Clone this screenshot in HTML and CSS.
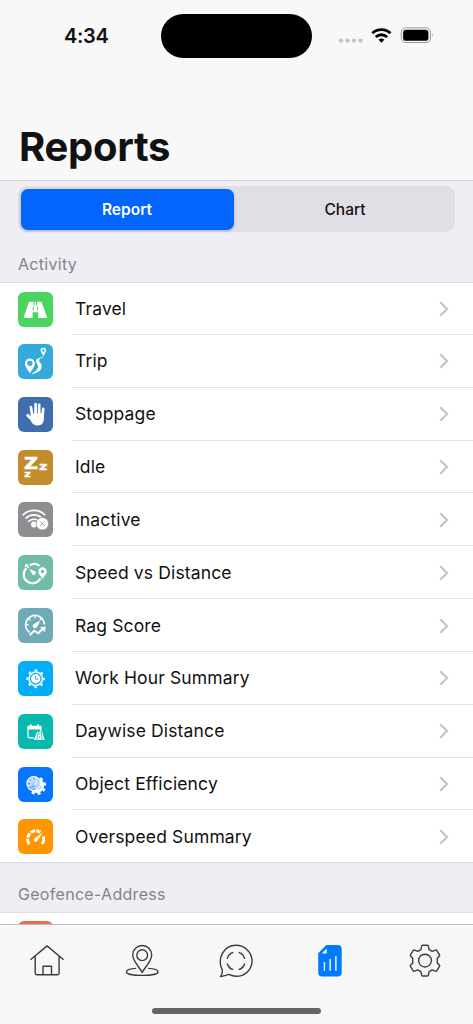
FILE: index.html
```html
<!DOCTYPE html>
<html lang="en">
<head>
<meta charset="utf-8">
<meta name="viewport" content="width=device-width, initial-scale=1">
<title>Reports</title>
<link rel="stylesheet" href="styles.css">
</head>
<body>
<div class="screen">
	<header class="header">
		<div class="status">
			<span class="time">4:34</span>
			<span class="island"></span>
			<svg class="indicators" viewBox="0 0 96 20">
				<g fill="#c4c4c5"><circle cx="3" cy="12.6" r="2.2"/><circle cx="9.5" cy="12.6" r="2.2"/><circle cx="16" cy="12.6" r="2.2"/><circle cx="22.5" cy="12.6" r="2.2"/></g>
				<g fill="none" stroke="#000" stroke-width="2.8"><path d="M34.3 5.2a13.4 13.4 0 0 1 18.2 0"/><path d="M37.7 9a8.3 8.3 0 0 1 11.4 0"/></g>
				<path d="M40.5 11.7a4.7 4.7 0 0 1 5.8 0l-2.9 3z"/>
				<rect x="63.3" y="-.1" width="29.2" height="14.6" rx="4.5" fill="none" stroke="#999" stroke-width="1"/>
				<rect x="65.1" y="1.8" width="25.3" height="10.9" rx="2.8"/>
				<path d="M94 5.2q1.7 2 0 4z" fill="#999"/>
			</svg>
		</div>
		<h1 class="title">Reports</h1>
	</header>

	<main class="content">
		<div class="segments">
			<button class="segment active">Report</button>
			<button class="segment">Chart</button>
		</div>

		<h2 class="section">Activity</h2>
		<ul class="list activity">
			<li class="row">
				<svg class="tile green" viewBox="0 0 35 35">
					<path fill="#fff" d="M11 9.700H15.500V13.500H19.200V9.700H23.500L29.300 25.900H20.200V20.300H14.600V25.900H5.500z"/>
					<path fill="#fff" d="M16.700 9.700h1.300l.2 3.900h-1.700z"/>
					<path stroke="#4cd461" stroke-width="1" d="M15.200 14.800v3.700M19.400 14.800v3.700"/>
				</svg>
				<span class="label">Travel</span>
				<svg class="chevron" viewBox="0 0 10 16"><path d="M1.3 1.3L8 8l-6.700 6.700"/></svg>
			</li>
			<li class="row">
				<svg class="tile sky" viewBox="0 0 35 35">
					<path fill="#fff" fill-rule="evenodd" d="M11.900 29.500C10 25.500 6.900 22.600 6.900 19.500a5 5 0 0 1 10 0c0 3.100-3.100 6-5 10zM11.900 16.700a2.600 2.600 0 1 0 0 5.200 2.600 2.600 0 0 0 0-5.200z"/>
					<path fill="#fff" fill-rule="evenodd" d="M25.400 12C24.500 9.700 22.600 8.400 22.600 6.500a2.800 2.800 0 0 1 5.600 0c0 1.900-1.900 3.200-2.800 5.500zM25.400 5.200a1.300 1.300 0 1 0 0 2.600 1.300 1.300 0 0 0 0-2.600z"/>
					<path fill="#fff" d="M25.700 12.200C24.200 14 21.200 14.200 21 16.200c-.1 2.200 3 2.900 2.700 6.300-.4 4.300-4.600 7.200-10.200 7.400 3.200-2.200 6.400-4 6.600-7.100.1-2.400-2.400-3.500-1.900-6.300.5-2.700 5-2.400 6.700-4.500z"/>
				</svg>
				<span class="label">Trip</span>
				<svg class="chevron" viewBox="0 0 10 16"><path d="M1.3 1.3L8 8l-6.700 6.700"/></svg>
			</li>
			<li class="row">
				<svg class="tile blue" viewBox="0 0 35 35">
					<g fill="none" stroke="#fff" stroke-linecap="round" stroke-width="2.700">
						<path d="M14.200 18.500L12.900 10M17.600 17V7.100M21.200 17V7.900M24.500 19l.7-7.200"/>
						<path stroke-width="2.900" d="M14.500 23L9.700 18.400"/>
					</g>
					<path fill="#fff" d="M12.800 16.200h13l.1 5.100c0 4.600-2.200 7.200-6.200 7.200-3 0-5.100-1.300-6.700-4.200z"/>
				</svg>
				<span class="label">Stoppage</span>
				<svg class="chevron" viewBox="0 0 10 16"><path d="M1.3 1.3L8 8l-6.700 6.700"/></svg>
			</li>
			<li class="row">
				<svg class="tile gold" viewBox="0 0 35 35">
					<g class="zzz">
						<text x="5.900" y="18.600" font-size="16.500" textLength="14" lengthAdjust="spacingAndGlyphs">Z</text>
						<text x="21.200" y="20.300" font-size="11" textLength="8" lengthAdjust="spacingAndGlyphs">z</text>
						<text x="6.200" y="27.300" font-size="9" textLength="6.400" lengthAdjust="spacingAndGlyphs">z</text>
					</g>
				</svg>
				<span class="label">Idle</span>
				<svg class="chevron" viewBox="0 0 10 16"><path d="M1.3 1.3L8 8l-6.700 6.700"/></svg>
			</li>
			<li class="row">
				<svg class="tile gray" viewBox="0 0 35 35">
					<g fill="none" stroke="#fff" stroke-width="1.700" stroke-linecap="round">
						<path d="M5.200 12.800a15.600 15.600 0 0 1 21.400-.2"/>
						<path d="M8 16.200a11.500 11.500 0 0 1 15.700-.3"/>
						<path d="M10.700 19.500a7.500 7.500 0 0 1 9.400-1"/>
					</g>
					<circle cx="16" cy="22.500" r="3" fill="#fff"/>
					<circle cx="24.300" cy="21.700" r="6.300" fill="#fff" stroke="#8e8d92" stroke-width=".8"/>
					<path stroke="#8e8d92" stroke-width=".8" d="M21.900 19.300l4.800 4.800M26.700 19.300l-4.800 4.800"/>
				</svg>
				<span class="label">Inactive</span>
				<svg class="chevron" viewBox="0 0 10 16"><path d="M1.3 1.3L8 8l-6.700 6.700"/></svg>
			</li>
			<li class="row">
				<svg class="tile mint" viewBox="0 0 35 35">
					<g fill="none" stroke="#fff" stroke-width="2.200">
						<path d="M11.700 10.200a8.800 8.800 0 0 1 9.900.7M8.500 13a8.800 8.800 0 1 0 13.800 10.500"/>
						<path d="M7.300 9.400l3.600 3.400M9.600 9.200l-2.700 2.600" stroke-width="1.500"/>
					</g>
					<path fill="#fff" d="M11.300 13.700l6 2.800a2 2 0 1 1-2.900 2.800z"/>
					<path fill="#fff" fill-rule="evenodd" d="M24.500 24.200c-1.300-3-4.200-4.800-4.200-7.700a4.200 4.200 0 0 1 8.400 0c0 2.900-2.900 4.700-4.200 7.700zM24.500 14.800a1.700 1.700 0 1 0 0 3.400 1.700 1.700 0 0 0 0-3.400z"/>
				</svg>
				<span class="label">Speed vs Distance</span>
				<svg class="chevron" viewBox="0 0 10 16"><path d="M1.3 1.3L8 8l-6.700 6.700"/></svg>
			</li>
			<li class="row">
				<svg class="tile teal" viewBox="0 0 35 35">
					<path fill="none" stroke="#fff" stroke-width="1.700" d="M11.800 24.500a9.300 9.300 0 1 1 14.500-8"/>
					<path stroke="#fff" stroke-width="1.200" d="M17 8v2.800M10.800 10.700l1.700 1.800M8.200 16.700h2.500M23.400 10.500l-1.600 1.700"/>
					<path fill="#fff" d="M22.300 12.600l-3.100 5.900a2.300 2.300 0 1 1-2.800-2.800z"/>
					<path fill="none" stroke="#fff" stroke-width="1.900" d="M11.700 27.300l4.500-4.500 4 2.500 4.700-4.600"/>
					<path fill="#fff" d="M22 19.300l5.800-.9-1 5.800z"/>
				</svg>
				<span class="label">Rag Score</span>
				<svg class="chevron" viewBox="0 0 10 16"><path d="M1.3 1.3L8 8l-6.700 6.700"/></svg>
			</li>
			<li class="row">
				<svg class="tile azure" viewBox="0 0 35 35">
					<circle cx="17.700" cy="17.800" r="6.700" fill="none" stroke="#fff" stroke-width="1.500"/>
					<circle cx="17.700" cy="17.800" r="8.400" fill="none" stroke="#fff" stroke-width="2" stroke-dasharray="2.600 3.997" stroke-dashoffset="1.300"/>
					<circle cx="17.700" cy="17.800" r="4.700" fill="#fff"/>
					<path fill="none" stroke="#04aef7" stroke-width=".9" d="M17.500 14.800v3.300h2.900"/>
				</svg>
				<span class="label">Work Hour Summary</span>
				<svg class="chevron" viewBox="0 0 10 16"><path d="M1.3 1.3L8 8l-6.700 6.700"/></svg>
			</li>
			<li class="row">
				<svg class="tile turquoise" viewBox="0 0 35 35">
					<path fill="none" stroke="#fff" stroke-width="1.200" d="M16 23.800h-4.400q-1.600 0-1.600-1.600V12.900h12.800v5"/>
					<path fill="#fff" d="M9.400 15.600v-2.400q0-1.400 1.400-1.400H12v-1.500h1.600v1.500h5.700v-1.500h1.600v1.500h1.200q1.400 0 1.400 1.400v2.400z"/>
					<path fill="#fff" d="M19 17.800h5.300l2.300 8.300H16z"/>
					<path stroke="#08b9af" stroke-width=".8" d="M20.300 18l-1.400 8M23 18l1.300 8M21.600 19v1.500M21.600 22.300v2"/>
				</svg>
				<span class="label">Daywise Distance</span>
				<svg class="chevron" viewBox="0 0 10 16"><path d="M1.3 1.3L8 8l-6.700 6.700"/></svg>
			</li>
			<li class="row">
				<svg class="tile royal" viewBox="0 0 35 35">
					<path fill="none" stroke="#fff" stroke-width="2.400" stroke-dasharray="3 3" d="M22 11.400a8 8 0 1 1-8.900 12.900"/>
					<path fill="none" stroke="#fff" stroke-width="3" d="M20.500 12.700a6 6 0 1 1-6.500 9.500"/>
					<circle cx="15.800" cy="16.600" r="7" fill="#bcdaff" stroke="#fff" stroke-width="1.100"/>
					<path fill="none" stroke="#0676ff" stroke-width=".7" d="M15.800 10.500v2M9.800 16.600h2.400M11.500 12.200l1.300 1.300M10.900 20.400l5.500-1 4.500-6.800-6.200 5M13.600 22h3.600"/>
					<path fill="#fff" d="M21.600 11.400l-4.200 7.100-1.900-1.600z"/>
				</svg>
				<span class="label">Object Efficiency</span>
				<svg class="chevron" viewBox="0 0 10 16"><path d="M1.3 1.3L8 8l-6.700 6.700"/></svg>
			</li>
			<li class="row">
				<svg class="tile orange" viewBox="0 0 35 35">
					<path fill="none" stroke="#fff" stroke-width="2.900" d="M11.200 25a8.200 8.200 0 0 1-1.700-5.300M9.700 18.600a8.200 8.200 0 0 1 2.200-4.100M12.700 13.700a8.200 8.200 0 0 1 4.400-1.900M18.300 11.800a8.200 8.200 0 0 1 4 1.500M25.300 17.400a8.200 8.200 0 0 1-1.200 7.600"/>
					<path fill="#fff" d="M25 13.300l-5.300 8a1.900 1.900 0 1 1-2.400-2.300z"/>
				</svg>
				<span class="label">Overspeed Summary</span>
				<svg class="chevron" viewBox="0 0 10 16"><path d="M1.3 1.3L8 8l-6.700 6.700"/></svg>
			</li>
		</ul>

		<h2 class="section address">Geofence-Address</h2>
		<ul class="list">
			<li class="row cut"><span class="tile coral"></span></li>
		</ul>
	</main>

	<footer class="footer">
		<nav class="tabs">
			<a class="tab"><svg viewBox="0 0 36 36"><path d="M1.500 16.700L18.100 2.900l16.500 13.800M6.200 13v17.100q0 1.600 1.600 1.600h20.700q1.600 0 1.600-1.600V13M14 31.500v-8.300h8.500v8.300"/></svg></a>
			<a class="tab"><svg viewBox="0 0 36 36"><path d="M18.200 29.400C15 23.500 8.700 18 8.700 12a9.500 9.500 0 0 1 19 0c0 6-6.300 11.500-9.500 17.400z"/><circle cx="18.200" cy="12.200" r="5.400"/><path d="M12.200 25.400C6.300 25.700 2.400 27 2.400 28.900c0 2 7 3.500 15.800 3.500S34 30.900 34 28.900c0-1.900-3.900-3.200-9.800-3.500"/></svg></a>
			<a class="tab"><svg viewBox="0 0 36 36"><path d="M2.500 33.600c1.500-2.100 2.200-4.500 1.700-6.700C-1.200 15.800 5.500 2.300 18 2.300c8.900 0 16 7 16 15.700S26.900 33.300 18 33.300c-3 0-5.100-.9-7.200-1.900-2.500.9-5.100 1.600-8.300 2.200z"/><path d="M9.200 15.800a9 9 0 0 1 6-6.400M20.700 9.400a9 9 0 0 1 6 6.400M26.700 20.500a9 9 0 0 1-6 6.200M15.200 26.700a9 9 0 0 1-6-6.200"/></svg></a>
			<a class="tab selected"><svg viewBox="0 0 36 36"><path class="page" d="M14.300 2h11.400q4 0 4 4v23.500q0 4-4 4H10.200q-4 0-4-4V10.300z"/><path class="fold" d="M14.700 5.600v4.800H9.900z"/><path class="bars" d="M12.400 19v8.800M18.100 15.900v11.900M23.900 13v14.800"/></svg></a>
			<a class="tab"><svg viewBox="0 0 36 36"><path d="M15.700 2.300h4.600q1 0 1.100 1l.7 3.300 3.200 1.700 3.200-1.200q.9-.3 1.400.5l2.600 4.300q.5.800-.2 1.400l-2 2v4.600l2 2q.7.600.2 1.400l-2.600 4.300q-.5.800-1.400.5l-3.200-1.200-3.200 1.700-.7 3.400q-.1 1-1.100 1h-4.600q-1 0-1.100-1l-.7-3.400-3.200-1.700-3.200 1.200q-.9.300-1.400-.5l-2.600-4.300q-.5-.8.200-1.400l2-2v-4.600l-2-2q-.7-.6-.2-1.400l2.600-4.300q.5-.8 1.400-.5l3.200 1.200 3.200-1.700.7-3.300q.1-1 1.100-1z"/><circle cx="18" cy="17.600" r="6.400"/></svg></a>
		</nav>
		<div class="home-bar"></div>
	</footer>
</div>
</body>
</html>
```
FILE: styles.css
```css
* {
	box-sizing: border-box;
}

body {
	margin: 0;
	background: #efeef4;
	color: #111;
	font-family: Inter, "Liberation Sans", sans-serif;
}

.screen {
	display: flex;
	flex-direction: column;
	height: 1024px;
	overflow: hidden;
}

.header {
	flex: none;
	height: 181px;
	background: #f8f8f8;
	border-bottom: 1px solid #d3d2d7;
}

.status {
	display: grid;
	grid-template-columns: 161px 151px 1fr;
	align-items: center;
	height: 58px;
	padding-top: 14px;
}

.time {
	padding-left: 64px;
	font-size: 20px;
	font-weight: 600;
	line-height: 44px;
	letter-spacing: -0.3px;
}

.island {
	height: 44px;
	border-radius: 22px;
	background: #000;
}

.indicators {
	width: 96px;
	height: 20px;
	margin: 3px 0 0 26px;
	overflow: visible;
}

.title {
	margin: 64px 0 0 19px;
	font-size: 40px;
	line-height: 50px;
	font-weight: 700;
	letter-spacing: -0.3px;
}

.content {
	flex: 1;
	min-height: 0;
	overflow: hidden;
}

.segments {
	display: grid;
	grid-template-columns: 213px 1fr;
	width: 437px;
	height: 46px;
	margin: 5px 0 0 18px;
	padding: 2.500px;
	border-radius: 9px;
	background: #e0dfe5;
}

.segment {
	padding: 0 0 0 4px;
	border: 0;
	border-radius: 7px;
	background: none;
	color: #111;
	font: 450 15.500px Inter, "Liberation Sans", sans-serif;
}

.segment.active {
	padding: 0;
	background: #0265ff;
	color: #fff;
	font-weight: 600;
	box-shadow: 0 1px 3px rgba(0,0,0,0.25);
}

.section {
	height: 51px;
	margin: 0;
	padding: 14px 0 0 18px;
	border-bottom: 1px solid #e0dfe4;
	color: #858489;
	font-size: 16px;
	font-weight: 400;
	line-height: 36px;
	letter-spacing: 0.300px;
}

.section.address {
	height: 50px;
	padding-top: 13px;
}

.list {
	margin: 0;
	padding: 0;
	list-style: none;
	background: #fff;
}

/* separator starts under the label, not the icon */
.row {
	display: flex;
	align-items: center;
	height: 52.840px;
	padding-left: 18px;
	background: linear-gradient(#e2e2e4,#e2e2e4) 72px 100% / 100% 1px no-repeat;
}

.activity .row:first-child {
	height: 52px;
}

.row:last-child {
	background: linear-gradient(#d9d9dd,#d9d9dd) 0 100% / 100% 1px no-repeat;
}

.row.cut {
	align-items: flex-start;
	padding-top: 8px;
}

.tile {
	flex: none;
	width: 35px;
	height: 35px;
	margin-right: 22px;
	border-radius: 6px;
}

.green { background: #4cd461; }
.sky { background: #34aadc; }
.blue { background: #3e6fac; }
.gold { background: #c28b2c; }
.gray { background: #8e8d92; }
.mint { background: #70bca6; }
.teal { background: #70a9b8; }
.azure { background: #04aef7; }
.turquoise { background: #08b9af; }
.royal { background: #0676ff; }
.orange { background: #ff9500; }
.coral { background: #eb6f48; }

.zzz {
	fill: #fff;
	stroke: #fff;
	stroke-width: 0.5px;
	font-family: "DejaVu Sans", sans-serif;
	font-weight: 700;
}

.label {
	flex: 1;
	padding-bottom: 1px;
	font-size: 17.500px;
	letter-spacing: 0.140px;
}

.chevron {
	width: 10px;
	height: 16px;
	margin-right: 24px;
	fill: none;
	stroke: #c4c4c7;
	stroke-width: 2.200;
}

.footer {
	flex: none;
	height: 100px;
	border-top: 1px solid #bdbdc0;
	background: #f7f7f7;
}

.tabs {
	display: grid;
	grid-template-columns: repeat(5, 1fr);
	height: 71px;
	padding-right: 1px;
}

.tab {
	display: flex;
	align-items: center;
	justify-content: center;
}

.tab svg {
	width: 36px;
	height: 36px;
	fill: none;
	stroke: #3c3c3c;
	stroke-width: 1.400;
	stroke-linejoin: round;
}

.selected .page {
	fill: #007aff;
	stroke: none;
}

.selected .fold {
	fill: #fff;
	stroke: none;
}

.selected .bars {
	stroke: #fff;
	stroke-width: 1.400;
}

.home-bar {
	width: 169px;
	height: 6px;
	margin: 12px auto 0;
	border-radius: 3px;
	background: #656565;
}
```
